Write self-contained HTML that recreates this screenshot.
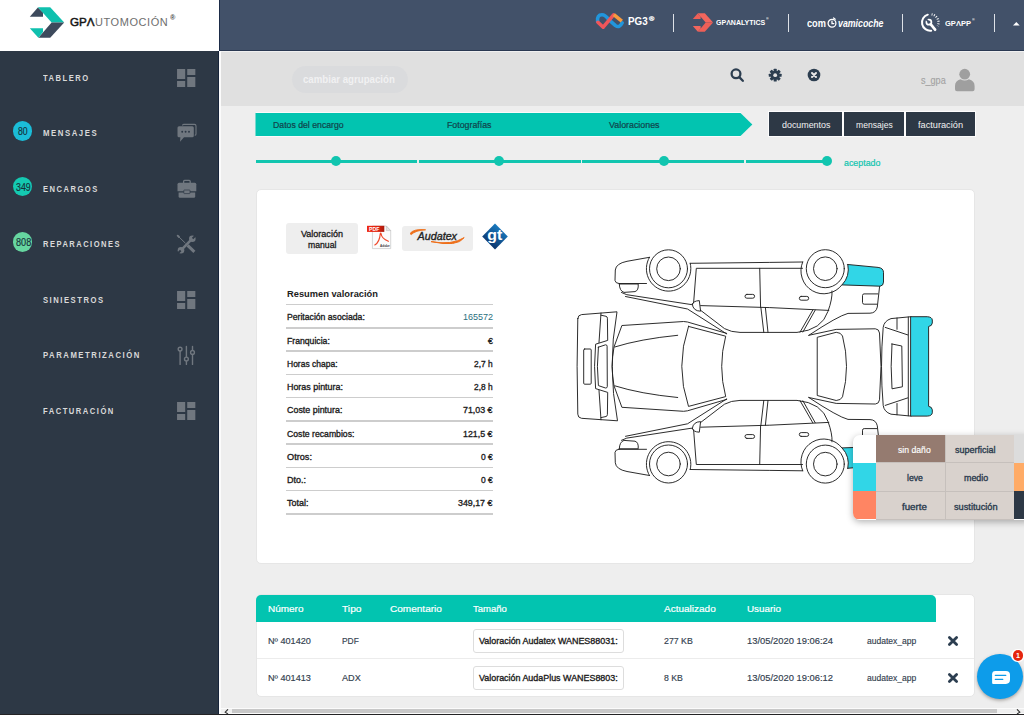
<!DOCTYPE html>
<html lang="es">
<head>
<meta charset="utf-8">
<title>GPAutomoción</title>
<style>
*{box-sizing:border-box;margin:0;padding:0}
html,body{width:1024px;height:715px;overflow:hidden;background:#eeeeee;font-family:"Liberation Sans",sans-serif;}
.abs{position:absolute}
.t{position:absolute;white-space:nowrap;line-height:1;transform-origin:left center}
#logo{left:0;top:0;width:219.3px;height:50.8px;background:#fff}
#top{left:219.3px;top:0;width:804.7px;height:51px;background:#425169;border-left:1.2px solid #1d2c48;border-bottom:1px solid #2a3952}
#side{left:0;top:50.8px;width:218px;height:664px;background:#2d3845}
#sideedge{left:217.9px;top:51px;width:1.4px;height:664px;background:#17243a}
#sideedge2{left:219.3px;top:51px;width:1.7px;height:664px;background:#fbfbfb}
#tool{left:221px;top:51px;width:803px;height:55.2px;background:#e0e0e0;border-top:1px solid #f0f0f0}
.badge{position:absolute;left:12.6px;width:19.6px;height:19.6px;border-radius:50%}
.card{position:absolute;background:#fff;border:1px solid #e6e6e6;border-radius:5px}
.btn{position:absolute;top:111.4px;height:25.4px;background:#2d3845;border:1.1px solid #fcfcfc}
.seg{position:absolute;top:159.9px;height:2.8px;background:#11c5af}
.dot{position:absolute;top:156.2px;width:10.2px;height:10.2px;border-radius:50%;background:#11c5af}
.rl{position:absolute;left:286px;width:207.3px;height:1.5px;background:#cdcdcd}
.inp{position:absolute;left:472.5px;width:151.5px;height:24px;border:1px solid #dddddd;border-radius:3px;background:#fff}
.lg{position:absolute;background:#d9d2cd}
.ico{position:absolute;left:174px}
</style>
</head>
<body>
<div id="logo" class="abs"></div>
<div id="top" class="abs"></div>
<div id="side" class="abs"></div>
<div id="sideedge" class="abs"></div>
<div id="sideedge2" class="abs"></div>
<div id="tool" class="abs"></div>

<!-- SIDEBAR badges + icons -->
<div class="badge" style="top:121.3px;background:#1bbdd8"></div>
<div class="badge" style="top:176.9px;background:#14c9b1"></div>
<div class="badge" style="top:232.2px;background:#66d6a0"></div>

<svg class="ico" style="top:65.9px" width="24.4" height="24" viewBox="0 0 24 24" preserveAspectRatio="none" fill="#70777f"><path d="M3 13h8V3H3v10zm0 8h8v-6H3v6zm10 0h8V11h-8v10zm0-18v6h8V3h-8z"/></svg>
<svg class="ico" style="top:287.9px" width="24.4" height="24" viewBox="0 0 24 24" preserveAspectRatio="none" fill="#70777f"><path d="M3 13h8V3H3v10zm0 8h8v-6H3v6zm10 0h8V11h-8v10zm0-18v6h8V3h-8z"/></svg>
<svg class="ico" style="top:398.9px" width="24.4" height="24" viewBox="0 0 24 24" preserveAspectRatio="none" fill="#70777f"><path d="M3 13h8V3H3v10zm0 8h8v-6H3v6zm10 0h8V11h-8v10zm0-18v6h8V3h-8z"/></svg>
<!-- messages icon -->
<svg class="abs" style="left:176px;top:122px" width="22" height="22" viewBox="176 122 22 22">
<path d="M182.5,125.5 Q182.5,124.4 183.7,124.4 L194.5,124.4 Q196,124.4 196,125.9 L196,134 Q196,135.3 194.7,135.3" fill="none" stroke="#70777f" stroke-width="1.1"/>
<path d="M179,126.2 L192.3,126.2 Q193.8,126.2 193.8,127.7 L193.8,135.7 Q193.8,137.2 192.3,137.2 L184,137.2 L180,141.8 L180.4,137.2 L179,137.2 Q177.5,137.2 177.5,135.7 L177.5,127.7 Q177.5,126.2 179,126.2 Z" fill="#70777f"/>
<circle cx="182.2" cy="131.7" r="0.95" fill="#2d3845"/><circle cx="185.6" cy="131.7" r="0.95" fill="#2d3845"/><circle cx="189" cy="131.7" r="0.95" fill="#2d3845"/>
</svg>
<!-- briefcase icon -->
<svg class="abs" style="left:176px;top:178px" width="22" height="22" viewBox="176 178 22 22">
<path d="M183.6,183 L183.6,181.4 Q183.6,180.4 184.6,180.4 L189.2,180.4 Q190.2,180.4 190.2,181.4 L190.2,183" fill="none" stroke="#70777f" stroke-width="1.3"/>
<path d="M179,182.8 L194.8,182.8 Q196.3,182.8 196.3,184.3 L196.3,191.3 L177.5,191.3 L177.5,184.3 Q177.5,182.8 179,182.8 Z" fill="#70777f"/>
<path d="M178.6,192.6 L195.2,192.6 L195.2,196.4 Q195.2,197.7 193.9,197.7 L179.9,197.7 Q178.6,197.7 178.6,196.4 Z" fill="#70777f"/>
<rect x="183.8" y="190" width="6.2" height="3.6" rx="0.6" fill="#70777f" stroke="#2d3845" stroke-width="0.7"/>
</svg>
<!-- tools icon -->
<svg class="abs" style="left:176px;top:233px" width="22" height="22" viewBox="176 233 22 22" fill="none" stroke="#70777f" stroke-linecap="round">
<path d="M178,236 L185.2,243" stroke-width="1"/>
<path d="M177.7,235.7 L179,237" stroke-width="1.9"/>
<path d="M187.6,245.3 L194.4,251.8" stroke-width="3" stroke-linecap="butt"/>
<path d="M182.6,248.6 L190.6,240.4" stroke-width="2.5" stroke-linecap="butt"/>
<circle cx="192.3" cy="238.8" r="3.3" fill="#70777f" stroke="none"/>
<circle cx="181" cy="250.2" r="3.3" fill="#70777f" stroke="none"/>
<path d="M192.6,238.5 L195.6,235.5" stroke="#2d3845" stroke-width="1.9" stroke-linecap="butt"/>
<path d="M180.7,250.5 L177.7,253.5" stroke="#2d3845" stroke-width="1.9" stroke-linecap="butt"/>
</svg>
<!-- sliders icon -->
<svg class="abs" style="left:176px;top:344px" width="22" height="22" viewBox="176 344 22 22" fill="none" stroke="#70777f" stroke-width="1.4" stroke-linecap="round">
<path d="M180.1,351.3 L180.1,364.4"/><circle cx="180.1" cy="349.1" r="1.9"/>
<path d="M186.4,346.5 L186.4,356.8 M186.4,361.2 L186.4,364.4"/><circle cx="186.4" cy="359" r="1.9"/>
<path d="M192.5,346.5 L192.5,350.2 M192.5,354.6 L192.5,364.4"/><circle cx="192.5" cy="352.4" r="1.9"/>
</svg>

<!-- LOGO -->
<svg class="abs" style="left:28px;top:5px" width="40" height="36" viewBox="28 5 40 36">
<polygon points="29.8,16.7 37.9,7.6 43,12.6 43,16.7" fill="#3d4a5c"/>
<polygon points="37.9,7.3 50.2,7.3 64.2,22.4 51.6,22.4" fill="#0fc0ae"/>
<polygon points="51.6,22.4 64.2,22.4 50.2,37.8 38.4,37.8" fill="#3d4a5c"/>
<polygon points="29.8,28.2 43,28.2 43,32 38.4,37.8" fill="#0fc0ae"/>
</svg>

<!-- TOP BAR LOGOS -->
<svg class="abs" style="left:594px;top:10px" width="32" height="24" viewBox="594 10 32 24" fill="none" stroke-linecap="round" stroke-linejoin="round">
<path d="M597.6,21.2 Q596.8,14.8 602,14.8 Q605.2,14.8 609,19.8 L615.5,25.6 Q619.5,28.4 622.2,22.8" stroke="#2196dc" stroke-width="3.6"/>
<path d="M597.9,22.3 L603.2,27.2 L613.6,14.9" stroke="#f0565a" stroke-width="3.6"/>
<path d="M613.8,14.6 L621.8,21.2" stroke="#f79a3e" stroke-width="3.6" stroke-linecap="butt"/>
</svg>
<div class="abs" style="left:673px;top:13.8px;width:1.4px;height:18.6px;background:#dde1e7"></div>
<svg class="abs" style="left:692px;top:12px" width="22" height="21" viewBox="692 12 22 21">
<polygon points="692.8,19 697.6,13.6 700.6,16.4 700.6,19" fill="#ee5f57"/>
<polygon points="697.6,13.3 704.8,13.3 713.1,22.5 705.7,22.5" fill="#f2665d"/>
<polygon points="705.7,22.5 713.1,22.5 704.8,31.8 697.9,31.8" fill="#ee5f57"/>
<polygon points="692.8,26 700.6,26 700.6,28.4 697.9,31.8" fill="#f2665d"/>
</svg>
<div class="abs" style="left:787.8px;top:13.8px;width:1.4px;height:18.6px;background:#dde1e7"></div>
<svg class="abs" style="left:825.7px;top:17.3px" width="12" height="12" viewBox="0 0 12 12" fill="none" stroke="#fff" stroke-width="1.3" stroke-linecap="round"><circle cx="6" cy="6.2" r="3.9"/><path d="M6,4.2 L6,6.6 L7.8,6.6"/><path d="M7.6,1 L9.2,2.2"/></svg>
<div class="abs" style="left:901.8px;top:13.8px;width:1.4px;height:18.6px;background:#dde1e7"></div>
<svg class="abs" style="left:920px;top:12px" width="21" height="21" viewBox="920 12 21 21" fill="none" stroke="#fff" stroke-linecap="round">
<path d="M927.8,14.66 A8.2,8.2 0 0 0 931.2,30.64" stroke-width="2"/>
<path d="M931.64,14.33 A8.3,8.3 0 0 1 937.72,26" stroke-width="2.3" stroke-dasharray="0.9 1.55" stroke-linecap="butt"/>
<path d="M930.6,24.2 L935.1,29.7" stroke-width="2.7"/>
<circle cx="928.9" cy="22.2" r="2.5" stroke-width="1.7"/>
<path d="M928.6,21.9 L925.6,18.6" stroke="#425169" stroke-width="1.7" stroke-linecap="butt"/>
</svg>
<div class="abs" style="left:993.8px;top:13.8px;width:1.4px;height:18.6px;background:#dde1e7"></div>
<svg class="abs" style="left:1013px;top:21.6px" width="7" height="4" viewBox="0 0 7 4"><polygon points="0,3.5 3.35,0 6.7,3.5" fill="#fff"/></svg>

<!-- TOOLBAR -->
<div class="abs" style="left:291.5px;top:65.5px;width:116px;height:27.5px;border-radius:14px;background:#dadbdd"></div>
<svg class="abs" style="left:729px;top:67px" width="16" height="16" viewBox="0 0 16 16" fill="none" stroke="#2c3e50" stroke-width="2.3" stroke-linecap="round"><circle cx="7" cy="6.8" r="4.4"/><path d="M10.5,10.4 L13.8,13.8"/></svg>
<svg class="abs" style="left:768.4px;top:68.1px" width="14.4" height="14.4" viewBox="-7.5 -7.5 15 15"><g fill="#2c3e50"><circle r="4.7"/><rect x="-1.6" y="-6.7" width="3.2" height="13.4" rx="0.6"/><rect x="-1.6" y="-6.7" width="3.2" height="13.4" rx="0.6" transform="rotate(45)"/><rect x="-1.6" y="-6.7" width="3.2" height="13.4" rx="0.6" transform="rotate(90)"/><rect x="-1.6" y="-6.7" width="3.2" height="13.4" rx="0.6" transform="rotate(135)"/></g><circle r="2" fill="#e1e1e1"/></svg>
<svg class="abs" style="left:807px;top:68px" width="14" height="14" viewBox="-7 -7 14 14"><circle r="6.35" fill="#2c3e50"/><path d="M-2,-2 L2,2 M2,-2 L-2,2" stroke="#e8e8e8" stroke-width="2" stroke-linecap="round"/></svg>
<svg class="abs" style="left:954px;top:68px" width="22" height="24" viewBox="954 68 22 24" fill="#9f9f9f"><circle cx="964.7" cy="74.2" r="5.4"/><path d="M955,90.4 L955,86 Q955,80.6 960.5,79.2 Q964.7,81.6 968.9,79.2 Q974.6,80.6 974.6,86 L974.6,89.2 Q974.6,91.2 972.6,91.2 L957,91.2 Q955,91.2 955,89.2 Z"/></svg>

<!-- TABS -->
<div class="abs" style="left:255.5px;top:111.7px;width:485px;height:25.5px;background:#fafafa"></div>
<svg class="abs" style="left:255px;top:111px" width="500" height="27" viewBox="255 111 500 27"><polygon points="255.5,112.9 740.5,112.9 752.3,124.5 740.5,136.1 255.5,136.1" fill="#02c4b0"/></svg>
<div class="btn" style="left:768px;width:75.2px"></div>
<div class="btn" style="left:843.2px;width:61.8px"></div>
<div class="btn" style="left:905px;width:70.8px"></div>

<!-- PROGRESS -->
<div class="seg" style="left:255.5px;width:161.8px"></div>
<div class="seg" style="left:418.6px;width:162.2px"></div>
<div class="seg" style="left:582px;width:162.4px"></div>
<div class="seg" style="left:745.6px;width:78px"></div>
<div class="dot" style="left:331.1px"></div>
<div class="dot" style="left:494.3px"></div>
<div class="dot" style="left:658.5px"></div>
<div class="dot" style="left:821.5px"></div>

<!-- CARDS -->
<div class="card" style="left:256px;top:189px;width:718.5px;height:374.5px"></div>
<div class="card" style="left:256px;top:594px;width:718.5px;height:103px"></div>

<!-- CARD 1 CONTENT -->
<div class="abs" style="left:286px;top:223px;width:72px;height:31px;background:#eeeeee;border-radius:3px"></div>
<svg class="abs" style="left:366px;top:224px" width="27" height="26" viewBox="366 224 27 26">
<defs><linearGradient id="pdfg" x1="0" y1="0" x2="1" y2="0"><stop offset="0" stop-color="#ee2a12"/><stop offset="0.6" stop-color="#e2220e"/><stop offset="1" stop-color="#a81b0d"/></linearGradient></defs>
<path d="M372.4,226 L386.3,226 L390.7,230.6 L390.7,248.6 L372.4,248.6 Z" fill="#fcfcfc" stroke="#c6c6c6" stroke-width="0.7"/>
<path d="M386.3,226 L386.3,230.6 L390.7,230.6 Z" fill="#e4e4e4" stroke="#b5b5b5" stroke-width="0.5"/>
<rect x="367" y="225.8" width="17.3" height="6.1" fill="url(#pdfg)"/>
<path d="M374.8,245 Q379.6,242.2 380.3,233.6 Q380.7,232.4 381.1,233.8 Q381.6,238.6 388.4,241.3" fill="none" stroke="#f0482a" stroke-width="1.15" stroke-linecap="round"/>
<text x="369" y="231" font-family="Liberation Sans, sans-serif" font-size="5.4" font-weight="bold" fill="#fff" textLength="10.5" lengthAdjust="spacingAndGlyphs">PDF</text>
<text x="380.1" y="246.7" font-family="Liberation Sans, sans-serif" font-size="3.7" font-weight="bold" fill="#3a3a3a" textLength="9.6" lengthAdjust="spacingAndGlyphs">Adobe</text>
</svg>
<div class="abs" style="left:401.7px;top:226px;width:71.5px;height:24.7px;background:#eeeeee;border-radius:3px"></div>
<svg class="abs" style="left:405px;top:227px" width="64" height="22" viewBox="405 227 64 22" fill="none">
<path d="M410,233.6 Q413.5,228.6 425.6,229.8 Q415.5,230.4 411.2,234.6 Z" fill="#ee6f1a" stroke="#ee6f1a" stroke-width="0.9" stroke-linejoin="round"/>
<path d="M431,241.6 Q452,245.4 464.2,237.6 Q457.5,247.4 431,241.6 Z" fill="#ee6f1a" stroke="#ee6f1a" stroke-width="1" stroke-linejoin="round"/>
<text x="417.6" y="240.2" font-family="Liberation Sans, sans-serif" font-size="10.8" font-style="italic" fill="#222" stroke="#222" stroke-width="0.35" textLength="39.4" lengthAdjust="spacingAndGlyphs">Audatex</text>
</svg>
<svg class="abs" style="left:481px;top:223px" width="28" height="28" viewBox="481 223 28 28">
<defs><linearGradient id="gtg" x1="0.8" y1="0.1" x2="0.25" y2="0.9"><stop offset="0" stop-color="#1b82c8"/><stop offset="1" stop-color="#0a2f66"/></linearGradient></defs>
<polygon points="495,223.6 507.8,236.5 495,249.4 482.2,236.5" fill="url(#gtg)"/>
<text x="487.2" y="239.8" font-family="Liberation Sans, sans-serif" font-size="14" font-weight="bold" fill="#fff" textLength="15" lengthAdjust="spacingAndGlyphs">gt</text>
</svg>
<div class="rl" style="top:303.95px"></div>
<div class="rl" style="top:327.20px"></div>
<div class="rl" style="top:350.45px"></div>
<div class="rl" style="top:373.70px"></div>
<div class="rl" style="top:396.95px"></div>
<div class="rl" style="top:420.20px"></div>
<div class="rl" style="top:443.45px"></div>
<div class="rl" style="top:466.70px"></div>
<div class="rl" style="top:489.95px"></div>
<div class="rl" style="top:513.20px"></div>


<!-- CAR DIAGRAM -->
<svg class="abs" style="left:570px;top:240px" width="375" height="250" viewBox="570 240 375 250" fill="none" stroke="#222" stroke-width="0.95" stroke-linecap="round" stroke-linejoin="round">
<defs>
<g id="sideview">
  <!-- wheels -->
  <circle cx="668.5" cy="268.8" r="19"/><circle cx="668.5" cy="268.8" r="11.8"/>
  <circle cx="825.3" cy="268.7" r="19"/><circle cx="825.3" cy="268.7" r="11.8"/>
  <!-- front arch -->
  <path d="M649.5,257.3 A22.3,22.3 0 1 0 690.2,263.3"/>
  <!-- rear arch -->
  <path d="M802.7,262 A22.9,22.9 0 0 0 842,284.8"/>
  <!-- front bumper -->
  <path d="M649.5,257.3 L627,261.3 Q616,263.5 615.3,270 L615,280.5 Q615.5,283.3 619,283.5 L646.5,283.5"/>
  <!-- headlight -->
  <path d="M619.3,284 L638.2,284 Q638.8,290.5 635,291.6 L624,292.4 Q619.5,291 619.3,284 Z"/>
  <!-- hood lines -->
  <path d="M621.5,292.5 L626.8,294.7 L691.5,304.6"/>
  <path d="M625.5,296.5 L687.5,309 L726.7,333.9"/>
  <!-- mirror -->
  <path d="M692.3,304.2 Q693,301 699.3,300.6 L700.6,311.2 Q693,311 692.3,304.2 Z" fill="#fff"/>
  <!-- a pillar + roof -->
  <path d="M700.6,310.3 L724.5,328.6 Q731,332.2 740,332.4 L797,332.4 Q822,330 828,311.3 Q832.5,299 832,291"/>
  <!-- sill -->
  <path d="M690.2,263.3 L769.8,262.4 L802.7,262"/>
  <!-- door -->
  <path d="M693.6,303 L696.3,268.3 L802.5,268.3"/>
  <path d="M700.6,305.6 L769.8,307.6 L828.8,310.4"/>
  <path d="M759.7,268.3 L760.6,307.3"/>
  <path d="M760.9,307.6 L763.8,332.4 M765.4,307.6 L768,332.4"/>
  <path d="M812.8,310 L800,332.2 M815.2,310.1 L802.9,332"/>
  <!-- handles -->
  <rect x="745" y="294.4" width="9.6" height="3.8" rx="1.9"/>
  <rect x="799.3" y="296.4" width="9.4" height="3.8" rx="1.9"/>
  <!-- rear body -->
  <path d="M879.6,286.4 L877.3,307 Q876,313 870,313.2 L848,313.4 Q838,316 808.8,335.3"/>
  <path d="M877.8,293.9 L864,293.9 Q862.5,294 862.5,295.5 L862.5,302.6 Q862.6,304.2 864.2,304.2 L876.9,304.2"/>
  <!-- rear bumper (leve) -->
  <path d="M847.8,264.5 L878.1,267.4 Q883.3,268 883.5,272.3 L883.5,282.1 Q883.4,285.8 880.1,286.2 L842,284.9 A22.9,22.9 0 0 0 847.8,264.5 Z" fill="#31d6e7"/>
</g>
</defs>
<use href="#sideview"/>
<use href="#sideview" transform="translate(0,732.8) scale(1,-1)"/>
<!-- TOP VIEW -->
<!-- front bumper -->
<path d="M577.8,318.6 Q577.9,315 581.5,314.6 L617,311.8 Q607,366.4 617.5,420.8 L581.5,418.3 Q577.9,417.8 577.8,414.2 Q576.4,366.4 577.8,318.6 Z"/>
<path d="M601,313 L599,342.5 M599,390.3 L601,419.8"/>
<path d="M601,315.2 L606,316.3 Q607.4,316.7 607.4,318.2 L607.7,340.4 L595.6,344.2 Q593.5,366.4 595.6,388.6 L607.7,392.4 L607.4,414.6 Q607.4,416.1 606,416.5 L601,417.6"/>
<path d="M598.4,347.2 L605.5,344.8 Q607,344.6 607.1,346.2 L607.3,386.6 Q607.1,388.2 605.5,388 L598.4,385.6 Q596.4,366.4 598.4,347.2 Z"/>
<rect x="583.7" y="349" width="7.5" height="35.2" rx="1"/>
<!-- hood -->
<path d="M726.7,333.4 L687.5,322 L683.6,321.5 L621.9,325.5 L614,347 Q610.4,366.4 614,385.8 L621.9,407.3 L683.6,411.3 L687.5,410.8 L726.7,399.4"/>
<path d="M614.7,347 Q640,339 677.7,335.3 M614.7,385.8 Q640,393.8 677.7,397.5"/>
<path d="M688.5,326.4 L725.7,336.2 Q717.7,366.4 725.7,396.6 L688.5,406.4 Q675,366.4 688.5,326.4 Z"/>
<!-- rear window + trunk -->
<path d="M817.6,337.2 L836.2,332.3 Q841,332.5 842.5,336 Q850.5,366.4 842.5,396.8 Q841,400.3 836.2,400.5 L817.6,395.6 Z"/>
<path d="M808.8,335.3 L836.2,329.4 L875.4,328.8 Q879,329 879.5,333 Q882.5,366.4 879.5,399.8 Q879,403.8 875.4,404 L836.2,403.4 L808.8,397.5"/>
<!-- rear bumper top view -->
<path d="M911,316.7 L891,318.6 Q884,321 883.2,327.4 Q879.8,366.4 883.2,405.4 Q884,411.8 891,414.2 L911,416.1"/>
<path d="M897,318 L897,329.3 M885.2,327.4 L907.7,334.9 M908.3,317 L908.3,415.8 M897,414.8 L897,403.5 M885.2,405.4 L907.7,397.9"/>
<path d="M892,344 L901.8,346 L902.4,386.8 L892,388.8 Q890.3,366.4 892,344 Z"/>
<path d="M911,316.7 L927.3,316.7 Q932,317 932.3,320 L932.3,323 Q932,326 928.6,326.5 L928.6,406.3 Q932,406.8 932.3,409.8 L932.3,412.8 Q932,415.8 927.3,416.1 L911,416.1 Z" fill="#31d6e7"/>
</svg>


<!-- LEGEND -->
<div class="abs" style="left:853px;top:434.5px;width:180px;height:85px;border-radius:7px;background:#fff;box-shadow:0 2px 7px rgba(0,0,0,0.3);overflow:hidden">
 <div class="abs" style="left:0;top:28px;width:23px;height:28.7px;background:#31d6e7"></div>
 <div class="abs" style="left:0;top:56.7px;width:23px;height:28.3px;background:#ff8563"></div>
 <div class="abs" style="left:23px;top:0;width:137.7px;height:85px;background:#c6c0bc"></div>
 <div class="lg" style="left:23px;top:0;width:68.7px;height:27.6px;background:#957b70"></div>
 <div class="lg" style="left:92.5px;top:0;width:68.2px;height:27.6px"></div>
 <div class="lg" style="left:23px;top:28.4px;width:68.7px;height:27.9px"></div>
 <div class="lg" style="left:92.5px;top:28.4px;width:68.2px;height:27.9px"></div>
 <div class="lg" style="left:23px;top:57.1px;width:68.7px;height:27.9px"></div>
 <div class="lg" style="left:92.5px;top:57.1px;width:68.2px;height:27.9px"></div>
 <div class="abs" style="left:160.7px;top:0;width:20px;height:28px;background:#dcdcdc"></div>
 <div class="abs" style="left:160.7px;top:28px;width:20px;height:28.7px;background:#ffab66"></div>
 <div class="abs" style="left:160.7px;top:56.7px;width:20px;height:28.3px;background:#2d3845"></div>
</div>

<!-- TABLE -->
<div class="abs" style="left:256px;top:594.5px;width:680px;height:27.5px;background:#02c4b0;border-radius:5px 5px 0 0"></div>
<div class="abs" style="left:257px;top:658.3px;width:716.5px;height:1.2px;background:#ececec"></div>
<div class="inp" style="top:628.5px"></div>
<div class="inp" style="top:665.5px"></div>
<svg class="abs" style="left:947.3px;top:634.6px" width="12" height="12" viewBox="-6 -6 12 12"><path d="M-3.6,-3.6 L3.6,3.6 M3.6,-3.6 L-3.6,3.6" stroke="#2c3e50" stroke-width="2.8" stroke-linecap="round"/></svg>
<svg class="abs" style="left:947.3px;top:672.1px" width="12" height="12" viewBox="-6 -6 12 12"><path d="M-3.6,-3.6 L3.6,3.6 M3.6,-3.6 L-3.6,3.6" stroke="#2c3e50" stroke-width="2.8" stroke-linecap="round"/></svg>

<!-- SCROLLBAR + bottom line -->
<div class="abs" style="left:221px;top:708.2px;width:803px;height:6.8px;background:#fbfbfb"></div>
<div class="abs" style="left:221px;top:709px;width:803px;height:3.8px;background:#efefef"></div>
<div class="abs" style="left:232px;top:709px;width:765px;height:3.8px;background:#c8c8c8"></div>
<svg class="abs" style="left:222px;top:709px" width="9" height="5" viewBox="0 0 9 5"><path d="M6,0.3 L3.2,3.2 L6,5" fill="none" stroke="#333" stroke-width="1.1"/></svg>
<svg class="abs" style="left:1014px;top:709px" width="9" height="5" viewBox="0 0 9 5"><path d="M3,0.3 L5.8,3.2 L3,5" fill="none" stroke="#333" stroke-width="1.1"/></svg>
<div class="abs" style="left:0;top:713.9px;width:1024px;height:1.1px;background:#242325"></div>
<!-- CHAT BUBBLE -->
<div class="abs" style="left:977.2px;top:653.5px;width:46px;height:45.5px;border-radius:50%;background:#0d9cea;box-shadow:0 1.5px 3.5px rgba(60,50,40,0.4)"></div>
<svg class="abs" style="left:990px;top:668px" width="22" height="18" viewBox="990 668 22 18"><path d="M995.5,670.9 L1005.9,670.9 Q1010,670.9 1010,675 L1010,679.8 Q1010,683.9 1005.9,683.9 L992.9,683.9 Q992.1,683.9 992.1,683.1 L992.1,674.3 Q992.1,670.9 995.5,670.9 Z" fill="#fff"/><path d="M995.3,675.3 L1005.8,675.3 M995.3,679.3 L1002.8,679.3" stroke="#0d9cea" stroke-width="1.3" stroke-linecap="round"/></svg>
<div class="abs" style="left:1011.3px;top:649px;width:13.4px;height:13.4px;border-radius:50%;background:#fff"></div>
<div class="abs" style="left:1012.6px;top:650.3px;width:10.8px;height:10.8px;border-radius:50%;background:#e5260f"></div>

<!-- TEXTS -->
<span class="t" id="nav0" style="left:42.50px;top:72.57px;font-size:9.6px;color:#d9d9d9;font-weight:bold;letter-spacing:1.9px;transform:scaleX(0.7920);">TABLERO</span>
<span class="t" id="nav1" style="left:42.50px;top:128.07px;font-size:9.6px;color:#d9d9d9;font-weight:bold;letter-spacing:1.9px;transform:scaleX(0.8126);">MENSAJES</span>
<span class="t" id="nav2" style="left:42.50px;top:183.57px;font-size:9.6px;color:#d9d9d9;font-weight:bold;letter-spacing:1.9px;transform:scaleX(0.7885);">ENCARGOS</span>
<span class="t" id="nav3" style="left:42.50px;top:239.07px;font-size:9.6px;color:#d9d9d9;font-weight:bold;letter-spacing:1.9px;transform:scaleX(0.7847);">REPARACIONES</span>
<span class="t" id="nav4" style="left:42.50px;top:294.57px;font-size:9.6px;color:#d9d9d9;font-weight:bold;letter-spacing:1.9px;transform:scaleX(0.7978);">SINIESTROS</span>
<span class="t" id="nav5" style="left:42.50px;top:350.07px;font-size:9.6px;color:#d9d9d9;font-weight:bold;letter-spacing:1.9px;transform:scaleX(0.8046);">PARAMETRIZACIÓN</span>
<span class="t" id="nav6" style="left:42.50px;top:405.57px;font-size:9.6px;color:#d9d9d9;font-weight:bold;letter-spacing:1.9px;transform:scaleX(0.7915);">FACTURACIÓN</span>
<span class="t" id="lg1" style="left:70.00px;top:16.61px;font-size:11.8px;color:#151515;-webkit-text-stroke:0.5px #151515;transform:scaleX(0.9865);">GPΛ</span>
<span class="t" id="lg2" style="left:95.30px;top:16.61px;font-size:11.8px;color:#6e6e6e;letter-spacing:0.6px;transform:scaleX(0.9321);">UTOMOCIÓN</span>
<span class="t" id="lg3" style="left:169.70px;top:15.40px;font-size:6.5px;color:#444;font-weight:bold;transform:scaleX(1.1049);">®</span>
<span class="t" id="pg3" style="left:628.30px;top:17.30px;font-size:10.4px;color:#fff;font-weight:bold;transform:scaleX(0.9473);">PG3</span>
<span class="t" id="pg3r" style="left:648.80px;top:15.75px;font-size:6.2px;color:#fff;-webkit-text-stroke:0.25px #fff;transform:scaleX(1.1397);">®</span>
<span class="t" id="gpan" style="left:715.80px;top:19.36px;font-size:7.9px;color:#fff;font-weight:bold;transform:scaleX(0.8898);">GPΛNALYTICS</span>
<span class="t" id="gpanr" style="left:765.80px;top:18.35px;font-size:3.6px;color:#fff;font-weight:bold;transform:scaleX(0.9788);">®</span>
<span class="t" id="com1" style="left:807.00px;top:18.23px;font-size:10.6px;color:#fff;font-weight:bold;transform:scaleX(0.8671);">com</span>
<span class="t" id="com2" style="left:837.60px;top:18.23px;font-size:10.6px;color:#fff;font-weight:bold;font-style:italic;transform:scaleX(0.8290);">vamicoche</span>
<span class="t" id="gpapp" style="left:944.70px;top:20.00px;font-size:7.8px;color:#fff;font-weight:bold;transform:scaleX(0.9674);">GPΛPP</span>
<span class="t" id="gpappr" style="left:971.80px;top:18.75px;font-size:3.6px;color:#fff;font-weight:bold;transform:scaleX(1.0165);">®</span>
<span class="t" id="camb" style="left:303.20px;top:74.80px;font-size:10.4px;color:#f1f1f2;font-weight:bold;transform:scaleX(0.9296);">cambiar agrupación</span>
<span class="t" id="sgpa" style="left:920.60px;top:76.03px;font-size:10px;color:#a3a3a3;-webkit-text-stroke:0.15px #a3a3a3;transform:scaleX(0.9064);">s_gpa</span>
<span class="t" id="tab1" style="left:272.70px;top:120.70px;font-size:8.5px;color:#11434b;-webkit-text-stroke:0.2px #11434b;transform:scaleX(1.0246);">Datos del encargo</span>
<span class="t" id="tab2" style="left:446.60px;top:120.70px;font-size:8.5px;color:#11434b;-webkit-text-stroke:0.2px #11434b;transform:scaleX(1.0349);">Fotografías</span>
<span class="t" id="tab3" style="left:608.50px;top:120.70px;font-size:8.5px;color:#11434b;-webkit-text-stroke:0.2px #11434b;transform:scaleX(1.0409);">Valoraciones</span>
<span class="t" id="b1" style="left:781.60px;top:120.98px;font-size:9px;color:#f2f2f2;transform:scaleX(0.9871);">documentos</span>
<span class="t" id="b2" style="left:855.70px;top:120.98px;font-size:9px;color:#f2f2f2;transform:scaleX(0.9525);">mensajes</span>
<span class="t" id="b3" style="left:917.70px;top:120.98px;font-size:9px;color:#f2f2f2;transform:scaleX(1.0220);">facturación</span>
<span class="t" id="acep" style="left:844.00px;top:158.78px;font-size:9px;color:#11c5af;-webkit-text-stroke:0.2px #11c5af;transform:scaleX(0.9825);">aceptado</span>
<span class="t" id="vm1" style="left:301.10px;top:229.82px;font-size:8.6px;color:#1c1c1c;-webkit-text-stroke:0.3px #1c1c1c;transform:scaleX(1.0483);">Valoración</span>
<span class="t" id="vm2" style="left:308.00px;top:241.42px;font-size:8.6px;color:#1c1c1c;-webkit-text-stroke:0.3px #1c1c1c;transform:scaleX(1.0075);">manual</span>
<span class="t" id="resumen" style="left:286.50px;top:288.80px;font-size:9.8px;color:#1c1c1c;font-weight:bold;transform:scaleX(0.9486);">Resumen valoración</span>
<span class="t" id="lab0" style="left:286.50px;top:313.27px;font-size:8.3px;color:#1c1c1c;-webkit-text-stroke:0.32px #1c1c1c;transform:scaleX(1.0412);">Peritación asociada:</span>
<span class="t" id="val0" style="left:462.70px;top:313.27px;font-size:8.3px;color:#2a6f80;transform:scaleX(1.0871);">165572</span>
<span class="t" id="lab1" style="left:286.50px;top:336.52px;font-size:8.3px;color:#1c1c1c;-webkit-text-stroke:0.32px #1c1c1c;transform:scaleX(1.0427);">Franquicia:</span>
<span class="t" id="val1" style="left:487.90px;top:336.52px;font-size:8.3px;color:#1c1c1c;-webkit-text-stroke:0.32px #1c1c1c;transform:scaleX(1.0595);">€</span>
<span class="t" id="lab2" style="left:286.50px;top:359.77px;font-size:8.3px;color:#1c1c1c;-webkit-text-stroke:0.32px #1c1c1c;transform:scaleX(1.0231);">Horas chapa:</span>
<span class="t" id="val2" style="left:474.20px;top:359.77px;font-size:8.3px;color:#1c1c1c;-webkit-text-stroke:0.32px #1c1c1c;transform:scaleX(1.0071);">2,7 h</span>
<span class="t" id="lab3" style="left:286.50px;top:383.02px;font-size:8.3px;color:#1c1c1c;-webkit-text-stroke:0.32px #1c1c1c;transform:scaleX(1.0724);">Horas pintura:</span>
<span class="t" id="val3" style="left:474.20px;top:383.02px;font-size:8.3px;color:#1c1c1c;-webkit-text-stroke:0.32px #1c1c1c;transform:scaleX(1.0071);">2,8 h</span>
<span class="t" id="lab4" style="left:286.50px;top:406.27px;font-size:8.3px;color:#1c1c1c;-webkit-text-stroke:0.32px #1c1c1c;transform:scaleX(1.0725);">Coste pintura:</span>
<span class="t" id="val4" style="left:463.30px;top:406.27px;font-size:8.3px;color:#1c1c1c;-webkit-text-stroke:0.32px #1c1c1c;transform:scaleX(1.0655);">71,03 €</span>
<span class="t" id="lab5" style="left:286.50px;top:429.52px;font-size:8.3px;color:#1c1c1c;-webkit-text-stroke:0.32px #1c1c1c;transform:scaleX(1.0439);">Coste recambios:</span>
<span class="t" id="val5" style="left:463.30px;top:429.52px;font-size:8.3px;color:#1c1c1c;-webkit-text-stroke:0.32px #1c1c1c;transform:scaleX(1.0655);">121,5 €</span>
<span class="t" id="lab6" style="left:286.50px;top:452.77px;font-size:8.3px;color:#1c1c1c;-webkit-text-stroke:0.32px #1c1c1c;transform:scaleX(1.1065);">Otros:</span>
<span class="t" id="val6" style="left:481.00px;top:452.77px;font-size:8.3px;color:#1c1c1c;-webkit-text-stroke:0.32px #1c1c1c;transform:scaleX(1.0219);">0 €</span>
<span class="t" id="lab7" style="left:286.50px;top:476.02px;font-size:8.3px;color:#1c1c1c;-webkit-text-stroke:0.32px #1c1c1c;transform:scaleX(1.0838);">Dto.:</span>
<span class="t" id="val7" style="left:481.00px;top:476.02px;font-size:8.3px;color:#1c1c1c;-webkit-text-stroke:0.32px #1c1c1c;transform:scaleX(1.0219);">0 €</span>
<span class="t" id="lab8" style="left:286.50px;top:499.27px;font-size:8.3px;color:#1c1c1c;-webkit-text-stroke:0.32px #1c1c1c;transform:scaleX(1.0835);">Total:</span>
<span class="t" id="val8" style="left:458.40px;top:499.27px;font-size:8.3px;color:#1c1c1c;-webkit-text-stroke:0.32px #1c1c1c;transform:scaleX(1.0651);">349,17 €</span>
<span class="t" id="l1" style="left:898.40px;top:445.68px;font-size:9px;color:#fff;-webkit-text-stroke:0.15px #fff;transform:scaleX(0.9609);">sin daño</span>
<span class="t" id="l2" style="left:955.00px;top:445.68px;font-size:9px;color:#2b3b4e;-webkit-text-stroke:0.35px #2b3b4e;transform:scaleX(0.9968);">superficial</span>
<span class="t" id="l3" style="left:906.80px;top:474.18px;font-size:9px;color:#2b3b4e;-webkit-text-stroke:0.35px #2b3b4e;transform:scaleX(0.9627);">leve</span>
<span class="t" id="l4" style="left:963.50px;top:474.18px;font-size:9px;color:#2b3b4e;-webkit-text-stroke:0.35px #2b3b4e;transform:scaleX(0.9871);">medio</span>
<span class="t" id="l5" style="left:902.40px;top:502.78px;font-size:9px;color:#2b3b4e;-webkit-text-stroke:0.35px #2b3b4e;transform:scaleX(1.0775);">fuerte</span>
<span class="t" id="l6" style="left:953.60px;top:502.78px;font-size:9px;color:#2b3b4e;-webkit-text-stroke:0.35px #2b3b4e;transform:scaleX(1.0251);">sustitución</span>
<span class="t" id="h1" style="left:268.40px;top:604.10px;font-size:9.8px;color:#fff;-webkit-text-stroke:0.2px #fff;transform:scaleX(1.0184);">Número</span>
<span class="t" id="h2" style="left:341.80px;top:604.10px;font-size:9.8px;color:#fff;-webkit-text-stroke:0.2px #fff;transform:scaleX(1.0426);">Tipo</span>
<span class="t" id="h3" style="left:389.50px;top:604.10px;font-size:9.8px;color:#fff;-webkit-text-stroke:0.2px #fff;transform:scaleX(1.0249);">Comentario</span>
<span class="t" id="h4" style="left:472.70px;top:604.10px;font-size:9.8px;color:#fff;-webkit-text-stroke:0.2px #fff;transform:scaleX(0.9725);">Tamaño</span>
<span class="t" id="h5" style="left:664.20px;top:604.10px;font-size:9.8px;color:#fff;-webkit-text-stroke:0.2px #fff;transform:scaleX(1.0206);">Actualizado</span>
<span class="t" id="h6" style="left:747.00px;top:604.10px;font-size:9.8px;color:#fff;-webkit-text-stroke:0.2px #fff;transform:scaleX(1.0069);">Usuario</span>
<span class="t" id="r0c1" style="left:268.40px;top:636.77px;font-size:8.3px;color:#33414f;-webkit-text-stroke:0.15px #33414f;transform:scaleX(1.0996);">Nº 401420</span>
<span class="t" id="r0c2" style="left:341.80px;top:636.77px;font-size:8.3px;color:#33414f;-webkit-text-stroke:0.15px #33414f;transform:scaleX(1.0115);">PDF</span>
<span class="t" id="r0c3" style="left:479.30px;top:636.77px;font-size:8.3px;color:#1c1c1c;-webkit-text-stroke:0.32px #1c1c1c;transform:scaleX(1.0778);">Valoración Audatex WANES88031:</span>
<span class="t" id="r0c4" style="left:664.20px;top:636.77px;font-size:8.3px;color:#33414f;-webkit-text-stroke:0.15px #33414f;transform:scaleX(1.0581);">277 KB</span>
<span class="t" id="r0c5" style="left:747.00px;top:636.77px;font-size:8.3px;color:#33414f;-webkit-text-stroke:0.15px #33414f;transform:scaleX(1.1295);">13/05/2020 19:06:24</span>
<span class="t" id="r0c6" style="left:867.30px;top:636.77px;font-size:8.3px;color:#33414f;-webkit-text-stroke:0.15px #33414f;transform:scaleX(1.0274);">audatex_app</span>
<span class="t" id="r1c1" style="left:268.40px;top:673.97px;font-size:8.3px;color:#33414f;-webkit-text-stroke:0.15px #33414f;transform:scaleX(1.0996);">Nº 401413</span>
<span class="t" id="r1c2" style="left:341.80px;top:673.97px;font-size:8.3px;color:#33414f;-webkit-text-stroke:0.15px #33414f;transform:scaleX(1.0960);">ADX</span>
<span class="t" id="r1c3" style="left:479.30px;top:673.97px;font-size:8.3px;color:#1c1c1c;-webkit-text-stroke:0.32px #1c1c1c;transform:scaleX(1.0740);">Valoración AudaPlus WANES8803:</span>
<span class="t" id="r1c4" style="left:664.20px;top:673.97px;font-size:8.3px;color:#33414f;-webkit-text-stroke:0.15px #33414f;transform:scaleX(1.0500);">8 KB</span>
<span class="t" id="r1c5" style="left:747.00px;top:673.97px;font-size:8.3px;color:#33414f;-webkit-text-stroke:0.15px #33414f;transform:scaleX(1.1295);">13/05/2020 19:06:12</span>
<span class="t" id="r1c6" style="left:867.30px;top:673.97px;font-size:8.3px;color:#33414f;-webkit-text-stroke:0.15px #33414f;transform:scaleX(1.0274);">audatex_app</span>
<span class="t" id="one" style="left:1015.90px;top:652.23px;font-size:8px;color:#fff;font-weight:bold;transform:scaleX(0.8982);">1</span>
<span class="t" id="b80" style="left:17.60px;top:126.43px;font-size:10.6px;color:#163039;-webkit-text-stroke:0.15px #163039;transform:scaleX(0.8223);">80</span>
<span class="t" id="b349" style="left:15.60px;top:181.83px;font-size:10.6px;color:#163039;-webkit-text-stroke:0.15px #163039;transform:scaleX(0.8311);">349</span>
<span class="t" id="b808" style="left:15.60px;top:237.33px;font-size:10.6px;color:#163039;-webkit-text-stroke:0.15px #163039;transform:scaleX(0.8594);">808</span>
</body>
</html>
